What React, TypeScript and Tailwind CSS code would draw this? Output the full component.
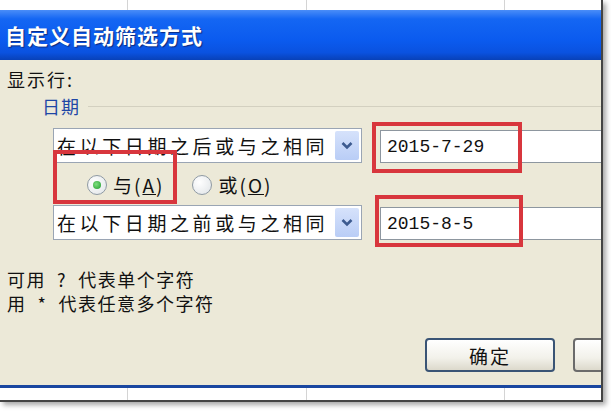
import React from 'react'

const cjk = "font-['Noto_Sans_CJK_SC','Noto_Sans',sans-serif]"
const mono = "font-['Liberation_Mono','Noto_Sans_CJK_SC',monospace]"

function GridStrip() {
    return (
        <div className="relative h-full w-full bg-white">
            <div className="absolute top-0 bottom-0 left-[127px] w-px bg-[#d4d4d4]" />
            <div className="absolute top-0 bottom-0 left-[306px] w-px bg-[#d4d4d4]" />
            <div className="absolute top-0 bottom-0 left-[504px] w-px bg-[#d4d4d4]" />
        </div>
    )
}

function Dropdown({ text }: { text: string }) {
    return (
        <div className="relative flex h-[35px] w-[309px] shrink-0 items-center border border-[#9aa5b4] bg-white">
            <span className={`${cjk} pl-[3px] text-[19px] leading-none tracking-[3.6px] text-[#111]`}>{text}</span>
            <div className="absolute right-[2px] top-[2px] bottom-[2px] flex w-[24px] items-center justify-center rounded-[2px] bg-[linear-gradient(180deg,#d6e2fb,#b9cdf6)]">
                <svg width="12" height="9" viewBox="0 0 12 9">
                    <path d="M1.5 2 L6 6.5 L10.5 2" fill="none" stroke="#3c5a8f" strokeWidth="2.6" />
                </svg>
            </div>
        </div>
    )
}

function DateBox({ value }: { value: string }) {
    return (
        <div className="mt-[2px] flex h-[33px] min-w-0 flex-1 items-center border border-[#8d969f] border-r-0 bg-white pl-[6px]">
            <span className={`${mono} text-[18px] leading-none text-[#111]`}>{value}</span>
        </div>
    )
}

function Radio({ checked }: { checked?: boolean }) {
    return (
        <div className="flex h-[20px] w-[20px] items-center justify-center rounded-full border border-[#8f9aa4] bg-[radial-gradient(circle_at_35%_35%,#ffffff,#dfe3e6)]">
            {checked && <div className="h-[8px] w-[8px] rounded-full bg-[radial-gradient(circle_at_40%_40%,#7fe07f,#1e9a2a)]" />}
        </div>
    )
}

export default function App() {
    return (
        <div className="relative h-[411px] w-[611px] overflow-hidden bg-white">
            <div className="flex h-[402px] w-[603px] flex-col overflow-hidden border-r-2 border-b-2 border-[#444] shadow-[3px_3px_5px_rgba(0,0,0,0.35)]">
                <div className="h-[10px] shrink-0">
                    <GridStrip />
                </div>

                {/* title bar */}
                <div className="flex h-[50px] shrink-0 items-center bg-[linear-gradient(180deg,#4a8df8_0%,#1466f3_18%,#0b5bef_60%,#0a52e0_85%,#0841b8_100%)] pl-[5px]">
                    <span className={`${cjk} text-[21px] font-bold leading-none tracking-[1px] text-white [text-shadow:1px_1px_1px_#0a2a80]`}>
                        自定义自动筛选方式
                    </span>
                </div>

                {/* body */}
                <div className={`${cjk} flex h-[325px] shrink-0 flex-col bg-[#ece9d8] pt-[8px] pl-[7px] text-[#111]`}>
                    <p className="h-[22px] text-[18px] leading-[22px] tracking-[2px]">显示行:</p>

                    <div className="mt-[6px] flex h-[20px] items-center pl-[35px]">
                        <span className="text-[18px] leading-none tracking-[1px] text-[#1f47a6]">日期</span>
                        <div className="ml-[8px] h-px flex-1 bg-[#d3d0c0]" />
                    </div>

                    <div className="mt-[12px] flex h-[35px] pl-[46px]">
                        <Dropdown text="在以下日期之后或与之相同" />
                        <div className="w-[18px] shrink-0" />
                        <DateBox value="2015-7-29" />
                    </div>

                    <div className="mt-[9px] flex h-[25px] items-center pl-[80px]">
                        <Radio checked />
                        <span className="ml-[6px] text-[19px] leading-none tracking-[2px]">
                            与(<span className="underline">A</span>)
                        </span>
                        <div className="ml-[28px]">
                            <Radio />
                        </div>
                        <span className="ml-[6px] text-[19px] leading-none tracking-[2px]">
                            或(<span className="underline">O</span>)
                        </span>
                    </div>

                    <div className="mt-[8px] flex h-[35px] pl-[46px]">
                        <Dropdown text="在以下日期之前或与之相同" />
                        <div className="w-[18px] shrink-0" />
                        <DateBox value="2015-8-5" />
                    </div>

                    <div className="mt-[27px] whitespace-pre text-[18px] leading-[24px] tracking-[1.5px]">
                        <p>可用  ?  代表单个字符</p>
                        <p>用  *  代表任意多个字符</p>
                    </div>

                    <div className="mt-[23px] flex h-[34px] gap-[18px] pl-[418px]">
                        <button className="flex h-[34px] w-[130px] shrink-0 items-center justify-center rounded-[4px] border-2 border-[#3a5475] bg-[linear-gradient(180deg,#ffffff,#f2f1ea_60%,#dcd9cc)] text-[19px] leading-none tracking-[2px] text-[#111]">
                            确定
                        </button>
                        <button className="h-[34px] w-[130px] shrink-0 rounded-[4px] border-2 border-[#6b6b6b] bg-[linear-gradient(180deg,#ffffff,#f2f1ea_60%,#dcd9cc)]" />
                    </div>
                </div>

                <div className="h-[3px] shrink-0 bg-[#1a47a0]" />
                <div className="flex-1">
                    <GridStrip />
                </div>
            </div>

            {/* red highlight boxes */}
            <div className="absolute left-[372px] top-[122px] h-[51px] w-[150px] border-4 border-[#d8363d]" />
            <div className="absolute left-[53px] top-[150px] h-[54px] w-[124px] border-4 border-[#d8363d]" />
            <div className="absolute left-[375px] top-[195px] h-[52px] w-[148px] border-4 border-[#d8363d]" />
        </div>
    )
}
